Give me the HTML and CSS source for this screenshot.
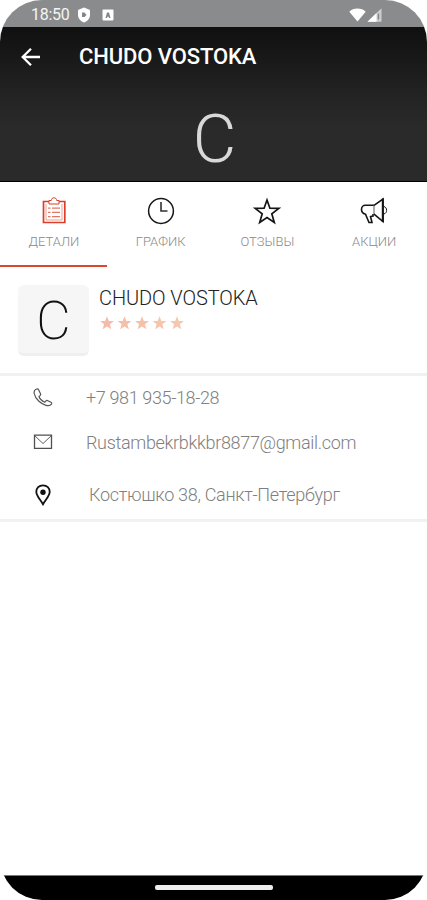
FILE: index.html
```html
<!DOCTYPE html>
<html lang="ru">
<head>
<meta charset="utf-8">
<title>CHUDO VOSTOKA</title>
<link rel="stylesheet" href="styles.css">
</head>
<body>
<div class="phone">
  <div class="status">
    <span class="time">18:50</span>
    <svg class="shield" width="14" height="16" viewBox="0 0 14 16"><path fill="#fff" d="M7 .5 13 3v5c0 3.500-2.500 6-6 7.500C3.500 14 1 11.500 1 8V3z"/><path fill="#858687" d="M5 5.500h2.500L9.500 8l-2 2H5z"/></svg>
    <svg class="appicon" width="12" height="12" viewBox="0 0 12 12"><rect x=".5" y=".5" width="11" height="11" rx="1" fill="#fff"/><path d="M3.500 9 5 3.500h2L8.500 9H7l-.3-1.300H5.300L5 9z" fill="#858687"/></svg>
    <svg class="wifi" width="17" height="14" viewBox="0 0 17 14"><path fill="#fff" d="M.3 3.700C2.500 1.500 5 .6 8.500.6s6 .9 8.200 3.100L8.500 13.600z"/></svg>
    <svg class="signal" width="15" height="14" viewBox="0 0 15 14"><path fill="#cfcfd0" d="M14.500.2v13.500H.5z"/><path fill="#fff" d="M9.500 5v8.700h-9z"/><path fill="#858687" d="M10.700 5.500h1.500v6h-1.500z"/></svg>
  </div>
  <header class="hero">
    <div class="bar">
      <svg class="back" width="20" height="20" viewBox="0 0 20 20"><path d="M19 10H2M10 1.700 1.700 10l8.300 8.300" fill="none" stroke="#fff" stroke-width="2.300"/></svg>
      <h1>CHUDO VOSTOKA</h1>
    </div>
    <div class="initial">C</div>
  </header>
  <nav class="tabs">
    <div class="tab active">
      <svg width="28" height="28" viewBox="0 0 28 28"><g fill="none" stroke="#d93f29"><path stroke-width="1.700" d="M9 4.500H3.500v21h21.300v-21H19"/><path stroke-width="1" d="M9 3.500h2.300c.3-2 1.300-2.700 2.700-2.700s2.400.7 2.700 2.700H19V7H9z"/><path stroke="#eda092" stroke-width="1" d="M6 7v16h16V7"/><path stroke="#e27766" stroke-width="1.200" d="M8 11.200h2.500M12 11.200h8M8 15.400h2.500M12 15.400h8M8 19.600h2.500M12 19.600h8"/></g></svg>
      <span class="t1">ДЕТАЛИ</span>
    </div>
    <div class="tab">
      <svg width="28" height="28" viewBox="0 0 28 28"><circle cx="14" cy="14" r="12.400" fill="none" stroke="#181818" stroke-width="1.500"/><path d="M14 5v9h6.500" fill="none" stroke="#303030" stroke-width="1.600"/></svg>
      <span class="t2">ГРАФИК</span>
    </div>
    <div class="tab">
      <svg width="28" height="28" viewBox="0 0 28 28"><path d="m14 3 2.900 8.200 8.900.2-7 5.400 2.500 8.700-7.300-5-7.300 5 2.500-8.700-7-5.400 8.900-.2z" fill="none" stroke="#151515" stroke-width="1.700"/></svg>
      <span class="t3">ОТЗЫВЫ</span>
    </div>
    <div class="tab">
      <svg width="28" height="28" viewBox="0 0 28 28"><g fill="none" stroke="#151515" stroke-width="1.600"><path d="M14 8.300H5.500C3 8.300 1.500 10 1.500 12.500c0 2 1.500 4 4 4.700l3.500 8.300h3L10.500 19.500l2.500-.5v-2"/><path stroke="#777" stroke-width="1.200" d="M14 8.300v9"/><path d="m14 8.300 9-6.300v22.500l-9-7.300"/><path stroke-width="2" d="M22.800 1.500V25"/><path stroke-width="1" d="M24 9.500c3.500 1 3.500 6.500 0 7.500"/></g></svg>
      <span class="t4">АКЦИИ</span>
    </div>
  </nav>
  <section class="summary">
    <div class="avatar">C</div>
    <div class="about">
      <h2>CHUDO VOSTOKA</h2>
      <svg class="stars" width="88" height="16" viewBox="0 0 88 16">
        <defs><path id="s" d="m8 1.200 1.800 4.700 5.100.2-4 3.200 1.400 4.900L8 11.400l-4.300 2.800 1.400-4.900-4-3.200 5.100-.2z"/></defs>
        <use href="#s" fill="#f6bba7"/><use href="#s" x="17.500" fill="#f6bfa7"/><use href="#s" x="35" fill="#f5c1a7"/><use href="#s" x="52.500" fill="#f6c6aa"/><use href="#s" x="70" fill="#f6c6ae"/>
      </svg>
    </div>
  </section>
  <section class="contacts">
    <div class="row phone-row">
      <svg width="20" height="20" viewBox="0 0 20 20"><path d="M3 1.300C1.500 2 .8 3.500 1.200 5.500 2.300 11 8 16 13 17.300c2.500.6 4.500.2 5.500-1.200.4-.8.100-1.500-.6-1.900l-3-1.500c-.8-.4-1.600-.2-2.200.5l-.9 1C9.500 13.200 6.800 10.800 6 8.500l1-.9c.6-.6.8-1.400.4-2.200L5.700 2C5.200 1 4 .8 3 1.300z" fill="none" stroke="#555" stroke-width="1.200"/></svg>
      <span class="tel">+7 981 935-18-28</span>
    </div>
    <div class="row mail-row">
      <svg width="20" height="20" viewBox="0 0 20 20"><path d="M1.500 3.200h17v13.200h-17z" fill="none" stroke="#505050" stroke-width="1.300"/><path d="m2 4 8 7.500L18 4" fill="none" stroke="#606060" stroke-width="1"/></svg>
      <span class="mail">Rustambekrbkkbr8877@gmail.com</span>
    </div>
    <div class="row place-row">
      <svg width="20" height="22" viewBox="0 0 20 22"><path d="M10 1.300c-4 0-6.700 2.700-6.700 6.500C3.300 12 7 15 10 20.300c3-5.300 6.700-8.300 6.700-12.500 0-3.800-2.700-6.500-6.700-6.500z" fill="none" stroke="#111" stroke-width="1.800"/><circle cx="10" cy="8.300" r="2.700" fill="#111"/></svg>
      <span class="place">Костюшко 38, Санкт-Петербург</span>
    </div>
  </section>
  <footer class="navbar"><div class="handle"></div></footer>
</div>
</body>
</html>
```
FILE: styles.css
```css
* { box-sizing: border-box; }
body { margin: 0; background: #fff; font-family: Roboto, sans-serif; }
h1, h2 { margin: 0; }
svg { display: block; flex: none; }
span, h1, h2 { white-space: nowrap; }

.phone { width: 427px; height: 900px; display: flex; flex-direction: column; border-radius: 42px; overflow: hidden; background: #fff; }

.status { height: 27px; flex: none; display: flex; align-items: center; padding: 2px 45px 0 31px; background: #8a8b8c; color: #f5f5f5; }
.time { width: 46px; font-size: 16px; line-height: 20px; letter-spacing: -.3px; }
.appicon { margin-left: 11px; }
.wifi { margin-left: auto; }
.signal { margin-left: 1px; }

.hero { height: 155px; flex: none; background: linear-gradient(#101010, #222 42%, #2a2a2a 65%); border-bottom: 1px solid #000; }
.bar { height: 59px; display: flex; align-items: center; padding-left: 21px; }
.bar h1 { margin-left: 38px; font-size: 22px; line-height: 28px; font-weight: 500; letter-spacing: -.1px; color: #fff; }
.initial { height: 95px; padding-top: 13px; padding-left: 2px; text-align: center; font-size: 67px; line-height: 80px; font-weight: 300; color: #d8d8d8; }

.tabs { height: 85px; flex: none; display: grid; grid-template-columns: repeat(4, 1fr); }
.tab { display: flex; flex-direction: column; align-items: center; padding-top: 15px; padding-left: 1px; border-bottom: 2px solid transparent; }
.tab.active { border-color: #d94a2c; }
.tab span { margin-top: 8px; font-size: 13px; line-height: 18px; font-weight: 300; color: #888; }

.summary { height: 109px; flex: none; display: flex; align-items: flex-start; padding: 18px; border-bottom: 3px solid #f1f1f1; }
.avatar { width: 71px; height: 71px; border-radius: 6px; background: #f6f6f6; border-bottom: 3px solid #efefef; text-align: center; font-size: 53px; line-height: 73px; font-weight: 200; color: #111; }
.about { margin-left: 10px; }
.about h2 { font-size: 20px; line-height: 26px; font-weight: 300; letter-spacing: -.08px; color: #222; }
.stars { margin-top: 4px; }

.contacts { height: 146px; flex: none; display: flex; flex-direction: column; border-bottom: 3px solid #f1f1f1; }
.row { display: flex; align-items: center; padding-left: 33px; font-size: 18px; font-weight: 300; color: #808080; }
.row span { margin-left: 33px; }
.phone-row { height: 44px; }
.mail-row { height: 47px; }
.place-row { height: 55px; padding-top: 5px; }
.row .tel { letter-spacing: -.37px; }
.row .mail { letter-spacing: -.32px; }
.row .place { margin-left: 36px; letter-spacing: -.3px; }

.navbar { height: 25px; margin-top: auto; background: #000; border-top: 1px solid #777; display: flex; justify-content: center; padding-top: 9px; }
.handle { width: 118px; height: 5px; border-radius: 2px; background: #eee; }
```
